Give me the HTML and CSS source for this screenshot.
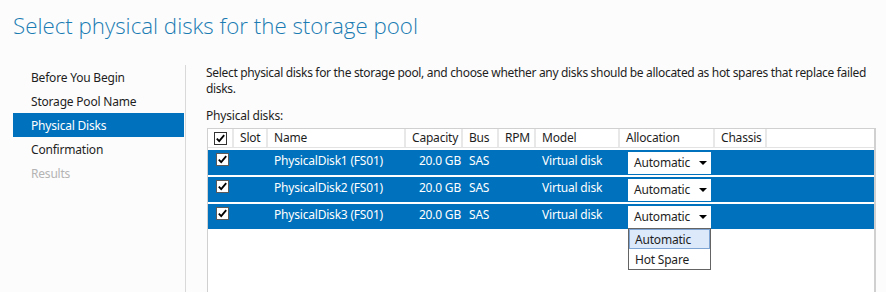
FILE: index.html
```html
<!DOCTYPE html>
<html lang="en">
<head>
    <meta charset="UTF-8">
    <title>Select physical disks for the storage pool</title>
    <link rel="stylesheet" href="styles.css">
</head>
<body>
    <h1 class="title">Select physical disks for the storage pool</h1>
    <div class="main">
        <ul class="steps">
            <li>Before You Begin</li>
            <li>Storage Pool Name</li>
            <li class="active">Physical Disks</li>
            <li>Confirmation</li>
            <li class="disabled">Results</li>
        </ul>
        <div class="content">
            <p class="intro">Select physical disks for the storage pool, and choose whether any disks should be allocated as hot spares that replace failed<br>disks.</p>
            <p class="label">Physical disks:</p>
            <div class="grid">
                <div class="row head">
                    <div class="cell c-check"><svg class="check" width="13" height="13" viewBox="0 0 13 13"><rect x="0.5" y="0.5" width="12" height="12" fill="#fff" stroke="#333"/><path d="M2.8 6.6 L5.2 9.2 L10.2 3.2" fill="none" stroke="#000" stroke-width="1.8"/></svg></div>
                    <div class="cell c-slot">Slot</div>
                    <div class="cell c-name">Name</div>
                    <div class="cell c-cap">Capacity</div>
                    <div class="cell c-bus">Bus</div>
                    <div class="cell c-rpm">RPM</div>
                    <div class="cell c-model">Model</div>
                    <div class="cell c-alloc">Allocation</div>
                    <div class="cell c-chassis">Chassis</div>
                    <div class="cell c-fill"></div>
                </div>
                <div class="row disk">
                    <div class="cell c-check"><svg class="check" width="13" height="13" viewBox="0 0 13 13"><rect x="0.5" y="0.5" width="12" height="12" fill="#fff" stroke="#5a5a5a"/><path d="M2.8 6.6 L5.2 9.2 L10.2 3.2" fill="none" stroke="#000" stroke-width="1.8"/></svg></div>
                    <div class="cell c-slot"></div>
                    <div class="cell c-name">PhysicalDisk1 (FS01)</div>
                    <div class="cell c-cap">20.0 GB</div>
                    <div class="cell c-bus">SAS</div>
                    <div class="cell c-rpm"></div>
                    <div class="cell c-model">Virtual disk</div>
                    <div class="cell c-alloc"><div class="select">Automatic<span class="arrow"></span></div></div>
                    <div class="cell c-chassis"></div>
                    <div class="cell c-fill"></div>
                </div>
                <div class="row disk">
                    <div class="cell c-check"><svg class="check" width="13" height="13" viewBox="0 0 13 13"><rect x="0.5" y="0.5" width="12" height="12" fill="#fff" stroke="#5a5a5a"/><path d="M2.8 6.6 L5.2 9.2 L10.2 3.2" fill="none" stroke="#000" stroke-width="1.8"/></svg></div>
                    <div class="cell c-slot"></div>
                    <div class="cell c-name">PhysicalDisk2 (FS01)</div>
                    <div class="cell c-cap">20.0 GB</div>
                    <div class="cell c-bus">SAS</div>
                    <div class="cell c-rpm"></div>
                    <div class="cell c-model">Virtual disk</div>
                    <div class="cell c-alloc"><div class="select">Automatic<span class="arrow"></span></div></div>
                    <div class="cell c-chassis"></div>
                    <div class="cell c-fill"></div>
                </div>
                <div class="row disk">
                    <div class="cell c-check"><svg class="check" width="13" height="13" viewBox="0 0 13 13"><rect x="0.5" y="0.5" width="12" height="12" fill="#fff" stroke="#5a5a5a"/><path d="M2.8 6.6 L5.2 9.2 L10.2 3.2" fill="none" stroke="#000" stroke-width="1.8"/></svg></div>
                    <div class="cell c-slot"></div>
                    <div class="cell c-name">PhysicalDisk3 (FS01)</div>
                    <div class="cell c-cap">20.0 GB</div>
                    <div class="cell c-bus">SAS</div>
                    <div class="cell c-rpm"></div>
                    <div class="cell c-model">Virtual disk</div>
                    <div class="cell c-alloc">
                        <div class="select open">Automatic<span class="arrow"></span>
                            <ul class="options">
                                <li class="hover">Automatic</li>
                                <li>Hot Spare</li>
                            </ul>
                        </div>
                    </div>
                    <div class="cell c-chassis"></div>
                    <div class="cell c-fill"></div>
                </div>
            </div>
        </div>
    </div>
</body>
</html>
```

FILE: styles.css
```css
* {
    padding: 0;
    margin: 0;
    box-sizing: border-box;
}

html, body {
    height: 100%;
    overflow: hidden;
}

body {
    background: #fcfcfc;
    font-family: 'Noto Sans', 'Open Sans', sans-serif;
    font-size: 12px;
    letter-spacing: -0.2px;
    color: #1e1e1e;
}

.title {
    height: 65px;
    padding: 10px 0 0 13px;
    font-family: 'Open Sans', 'Noto Sans', sans-serif;
    font-weight: 300;
    font-size: 22.3px;
    letter-spacing: 0;
    line-height: 32px;
    color: #1b7cb3;
}

.main {
    display: flex;
    height: calc(100% - 65px);
    overflow: hidden;
}

.steps {
    flex: none;
    list-style: none;
    width: 173px;
    margin-left: 13px;
    border-right: 1px solid #d9d9d9;
}

.steps li {
    height: 24px;
    line-height: 25px;
    padding-left: 18px;
}

.steps li.active {
    background: #0071bc;
    color: #fff;
    margin-right: 1px;
}

.steps li.disabled {
    color: #b4b4b4;
}

.content {
    flex: 1;
    min-width: 0;
    padding: 0 10px 0 20px;
}

.intro {
    line-height: 16px;
    letter-spacing: -0.32px;
    white-space: nowrap;
}

.label {
    margin-top: 11px;
    line-height: 16px;
}

.grid {
    margin-top: 4px;
    margin-left: 1px;
    height: 200px;
    border: 1px solid #d0d0d0;
    border-right-width: 2px;
    background: #fff;
}

.row {
    display: flex;
}

.cell {
    flex: none;
    white-space: nowrap;
}

.head {
    height: 19px;
    border-bottom: 1px solid #e3e3e3;
}

.head .cell {
    line-height: 18px;
    padding-left: 6px;
    border-right: 2px solid #e8e8e8;
}

.disk {
    height: 25px;
    margin-top: 2px;
    background: #0071bc;
    color: #fff;
}

.disk .cell {
    padding: 3px 0 0 6px;
    line-height: 16px;
}

.c-check { width: 26px; }
.c-slot { width: 34px; }
.c-name { width: 138px; }
.c-cap { width: 57px; }
.c-bus { width: 36px; }
.c-rpm { width: 37px; }
.c-model { width: 84px; }
.c-alloc { width: 95px; }
.c-chassis { width: 52px; }
.c-fill { flex: 1; border-right: none !important; }

.head .c-check {
    padding: 3px 0 0 6px;
}

.disk .c-check {
    padding: 3px 0 0 8px;
}

.check {
    display: block;
}

.disk .c-cap {
    text-align: right;
    padding: 3px 2px 0 0;
}

.disk .c-alloc {
    padding: 2px 0 0 8px;
}

.select {
    position: relative;
    width: 83px;
    height: 22px;
    line-height: 22px;
    padding-left: 6px;
    background: #fff;
    color: #1e1e1e;
}

.arrow {
    position: absolute;
    right: 4px;
    top: 9px;
    border-left: 4px solid transparent;
    border-right: 4px solid transparent;
    border-top: 4px solid #000;
}

.options {
    position: absolute;
    left: 0;
    top: 22px;
    width: 83px;
    list-style: none;
    background: #fff;
    border: 1px solid #646464;
}

.options li {
    height: 20px;
    line-height: 19px;
    padding-left: 5px;
    border: 1px solid transparent;
}

.options li.hover {
    background: #dce9fb;
    border-color: #7ea4d3;
}
```
